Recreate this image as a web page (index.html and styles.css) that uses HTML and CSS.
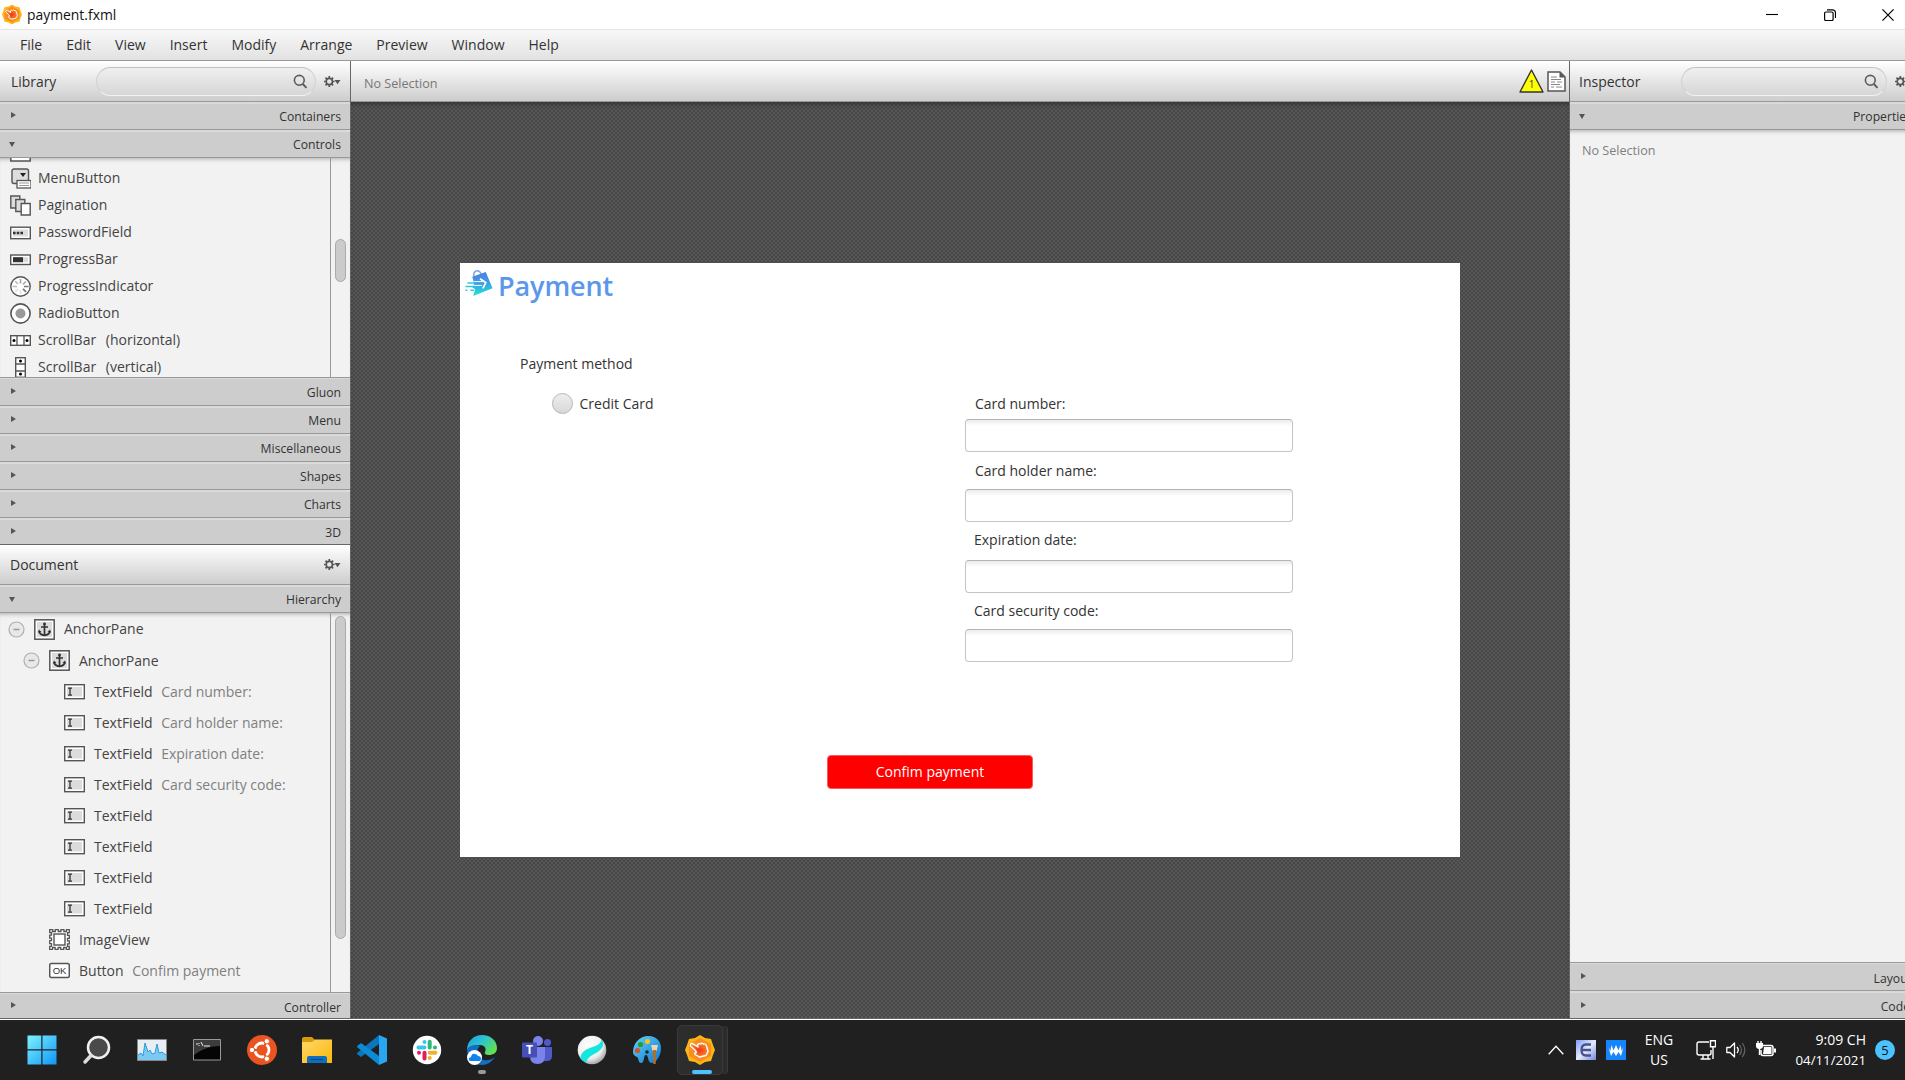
FILE: index.html
```html
<!DOCTYPE html>
<html lang="en">
<head>
<meta charset="utf-8">
<title>payment.fxml</title>
<link rel="stylesheet" href="styles.css">
</head>
<body>
<svg class="defs" width="0" height="0" aria-hidden="true">
  <defs>
    <linearGradient id="gWin" x1="0" y1="0" x2="1" y2="1"><stop offset="0" stop-color="#7df3ff"/><stop offset="1" stop-color="#0f96f8"/></linearGradient>
    <linearGradient id="gFolder" x1="0" y1="0" x2="1" y2="1"><stop offset="0" stop-color="#ffd76a"/><stop offset="1" stop-color="#fbb80b"/></linearGradient>
    <linearGradient id="gEdge" x1="0" y1="0" x2="1" y2="0.6"><stop offset="0" stop-color="#1f9fe0"/><stop offset=".5" stop-color="#2bc3d2"/><stop offset="1" stop-color="#62e04f"/></linearGradient>
    <linearGradient id="gBag" x1="0" y1="0" x2="0" y2="1"><stop offset="0" stop-color="#4a7fe0"/><stop offset=".45" stop-color="#3f9de6"/><stop offset="1" stop-color="#19ead0"/></linearGradient>
    <linearGradient id="gPaint" x1="0" y1="0" x2="1" y2="1"><stop offset="0" stop-color="#5fd3fb"/><stop offset="1" stop-color="#0f78cf"/></linearGradient>
    <linearGradient id="gE" x1="0" y1="0" x2="1" y2="1"><stop offset="0" stop-color="#7f9cf0"/><stop offset=".5" stop-color="#e4ebff"/><stop offset="1" stop-color="#7488d8"/></linearGradient>
    <radialGradient id="gBall" cx=".4" cy=".35" r=".7"><stop offset="0" stop-color="#fff"/><stop offset=".65" stop-color="#eee"/><stop offset="1" stop-color="#999"/></radialGradient>
    <radialGradient id="gHand"><stop offset="0" stop-color="#f0341c"/><stop offset="1" stop-color="#f98324"/></radialGradient>
    <symbol id="scene" viewBox="0 0 30 30">
      <path d="M15 0l5 3 6 1 2 6 2 5-2 5-2 6-6 1-5 3-5-3-6-1-2-6-2-5 2-5 2-6 6-1z" fill="#fdb515"/>
      <path d="M15 3l11 6v12l-11 6-11-6V9z" fill="#fa8d22"/>
      <path d="M5.500 9.500Q6 8 8 8.800L13 12 12.500 9.800Q14 8 15.500 9 17 7.500 18.500 9 21 8.500 21.500 11L23 16.500 21 20.500 14.500 22 10 19.500Q9 17.500 11.500 17.500L10.500 15.500 6 11.500Q5 10.500 5.500 9.500z" fill="url(#gHand)" stroke="#fff" stroke-width="1.400" stroke-linejoin="round"/>
    </symbol>
    <symbol id="search" viewBox="0 0 15 15"><circle cx="6.300" cy="6.300" r="4.900" fill="none" stroke="#5c5c5c" stroke-width="1.600"/><path d="M9.800 10l3.700 3.900" stroke="#5c5c5c" stroke-width="1.900"/></symbol>
    <symbol id="gear" viewBox="0 0 17 11"><circle cx="5.300" cy="5.500" r="3.100" fill="none" stroke="#555" stroke-width="1.600"/><path d="M5.300 0v2M5.300 9v2M0 5.500h1.800M8.800 5.500h1.800M1.500 1.700l1.400 1.400M7.700 7.900l1.400 1.400M9.100 1.700L7.700 3.100M2.900 7.900L1.500 9.300" stroke="#555" stroke-width="1.700"/><path d="M10.500 4h6l-3 4.300z" fill="#555"/></symbol>
    <symbol id="textfield" viewBox="0 0 21 21"><rect x=".7" y="3.700" width="19.600" height="14" fill="#fff" stroke="#555" stroke-width="1.400"/><rect x="3" y="6" width="15" height="9.500" fill="#dcdcdc"/><path d="M4 7.200h4M4 14.200h4M6 7v7" stroke="#333" stroke-width="1.300"/></symbol>
    <symbol id="anchor" viewBox="0 0 21 21"><rect x=".8" y=".8" width="19.400" height="19.400" fill="#fff" stroke="#555" stroke-width="1.500"/><rect x="3" y="3" width="15" height="15" fill="#dcdcdc"/><path d="M10.500 4.500v12M7 8h7M5 12c.5 3 2.500 4 5.500 4.500 3-.5 5-1.500 5.500-4.500" fill="none" stroke="#333" stroke-width="1.700"/><circle cx="10.500" cy="5" r="1.400" fill="#333"/><path d="M4 13.500l1-3 2.500 2.500zM17 13.500l-1-3-2.500 2.500z" fill="#333"/></symbol>
    <symbol id="minus" viewBox="0 0 17 17"><circle cx="8.500" cy="8.500" r="7.500" fill="#e8e8e8" stroke="#b0b0b0" stroke-width="1.200"/><path d="M5.500 8.500h6" stroke="#999" stroke-width="1.500"/></symbol>
  </defs>
</svg>

<header class="titlebar">
  <svg class="app-icon" viewBox="0 0 30 30"><use href="#scene"/></svg>
  <span class="file-name">payment.fxml</span>
  <div class="window-buttons">
    <svg viewBox="0 0 12 12"><path d="M0 5.500h12" stroke="#000" stroke-width="1.100"/></svg>
    <svg viewBox="0 0 12 12"><rect x=".6" y="3" width="8.500" height="8.500" rx="1.300" fill="none" stroke="#000" stroke-width="1.200"/><path d="M3 .8h5.500a3 3 0 0 1 3 3V9" fill="none" stroke="#000" stroke-width="1.200"/></svg>
    <svg viewBox="0 0 12 12"><path d="M.4.400l11.200 11.200M11.600.400L.400 11.600" stroke="#000" stroke-width="1.200"/></svg>
  </div>
</header>

<nav class="menubar">
  <span>File</span><span>Edit</span><span>View</span><span>Insert</span><span>Modify</span><span>Arrange</span><span>Preview</span><span>Window</span><span>Help</span>
</nav>

<main class="workspace">
  <aside class="left">
    <div class="panel-head">
      <span class="panel-name library-name">Library</span>
      <div class="search"><svg viewBox="0 0 15 15"><use href="#search"/></svg></div>
      <svg class="gear" viewBox="0 0 17 11"><use href="#gear"/></svg>
    </div>
    <div class="section"><i class="arrow"></i>Containers</div>
    <div class="section"><i class="arrow down"></i>Controls</div>
    <div class="list library-list">
      <div class="rows">
        <div class="row"><svg viewBox="0 0 21 21"><rect x=".8" y="9" width="19.400" height="11" fill="#fff" stroke="#555" stroke-width="1.500"/></svg></div>
        <div class="row"><svg viewBox="0 0 21 21"><rect x="2" y="1" width="16.500" height="14.500" rx="2" fill="#ddd" stroke="#555" stroke-width="1.400"/><path d="M10 5h6l-3 4z" fill="#222"/><rect x="7" y="12.500" width="14" height="7.500" fill="#fff" stroke="#555" stroke-width="1.300"/><path d="M9 15h10M9 17.500h10" stroke="#999"/></svg>MenuButton</div>
        <div class="row"><svg viewBox="0 0 21 21"><g stroke="#555" stroke-width="1.400"><path d="M.8 1h9v12h-9z" fill="#ddd"/><path d="M5.800 4.500h9v12h-9z" fill="#ddd"/><path d="M11.200 8.500h9v11.500h-9z" fill="#fff"/></g></svg>Pagination</div>
        <div class="row"><svg viewBox="0 0 21 21"><rect x=".7" y="5.200" width="19.600" height="11.500" fill="#fff" stroke="#555" stroke-width="1.400"/><path d="M3 7.500h15v7H3z" fill="#dcdcdc"/><path d="M3 9.700h2.600v2.600H3zM6.700 9.700h2.600v2.600H6.700zM10.400 9.700H13v2.600h-2.600z" fill="#333"/></svg>PasswordField</div>
        <div class="row"><svg viewBox="0 0 21 21"><rect x=".7" y="6" width="19.600" height="9.500" fill="#fff" stroke="#555" stroke-width="1.400"/><path d="M3 8.200h15v5H3z" fill="#dcdcdc"/><path d="M3 8.200h10v5H3z" fill="#333"/></svg>ProgressBar</div>
        <div class="row"><svg viewBox="0 0 21 21"><circle cx="10.500" cy="10.500" r="9.700" fill="#fff" stroke="#555" stroke-width="1.400"/><g stroke-width="1.700"><path d="M10.500 3v4.500M13 8.500l2.800-3" stroke="#aaa"/><path d="M14 10.500h4.500M13 12.800l3 3" stroke="#777"/><path d="M10.500 14v4M8.200 12.800l-3 3" stroke="#e4e4e4"/><path d="M7 10.500H2.700M8 8L5.200 5.200" stroke="#bbb"/></g></svg>ProgressIndicator</div>
        <div class="row"><svg viewBox="0 0 21 21"><circle cx="10.500" cy="10.500" r="9.600" fill="#fff" stroke="#555" stroke-width="1.600"/><circle cx="10.500" cy="10.500" r="5" fill="#999"/></svg>RadioButton</div>
        <div class="row"><svg viewBox="0 0 21 21"><rect x=".7" y="5.700" width="19.600" height="9.600" fill="#fff" stroke="#555" stroke-width="1.400"/><path d="M7 6v9M14 6v9" stroke="#555" stroke-width="1.300"/><circle cx="4" cy="10.500" r="1.500"/><circle cx="17" cy="10.500" r="1.500"/></svg>ScrollBar&nbsp; <span class="variant">(horizontal)</span></div>
        <div class="row"><svg viewBox="0 0 21 21"><rect x="5.700" y=".7" width="9.600" height="19.600" fill="#fff" stroke="#555" stroke-width="1.400"/><path d="M6 7h9M6 14h9" stroke="#555" stroke-width="1.300"/><circle cx="10.500" cy="4" r="1.500"/><circle cx="10.500" cy="17" r="1.500"/></svg>ScrollBar&nbsp; <span class="variant">(vertical)</span></div>
      </div>
      <div class="track"><div class="thumb library-thumb"></div></div>
    </div>
    <div class="section first"><i class="arrow"></i>Gluon</div>
    <div class="section"><i class="arrow"></i>Menu</div>
    <div class="section"><i class="arrow"></i>Miscellaneous</div>
    <div class="section"><i class="arrow"></i>Shapes</div>
    <div class="section"><i class="arrow"></i>Charts</div>
    <div class="section last"><i class="arrow"></i>3D</div>
    <div class="panel-head document-head">
      <span class="panel-name">Document</span>
      <svg class="gear" viewBox="0 0 17 11"><use href="#gear"/></svg>
    </div>
    <div class="section"><i class="arrow down"></i>Hierarchy</div>
    <div class="list tree-list">
      <div class="rows tree">
        <div class="node root"><svg class="toggle"><use href="#minus"/></svg><svg><use href="#anchor"/></svg>AnchorPane</div>
        <div class="node root child"><svg class="toggle"><use href="#minus"/></svg><svg><use href="#anchor"/></svg>AnchorPane</div>
        <div class="node leaf"><svg><use href="#textfield"/></svg>TextField<span class="info">Card number:</span></div>
        <div class="node leaf"><svg><use href="#textfield"/></svg>TextField<span class="info">Card holder name:</span></div>
        <div class="node leaf"><svg><use href="#textfield"/></svg>TextField<span class="info">Expiration date:</span></div>
        <div class="node leaf"><svg><use href="#textfield"/></svg>TextField<span class="info">Card security code:</span></div>
        <div class="node leaf"><svg><use href="#textfield"/></svg>TextField</div>
        <div class="node leaf"><svg><use href="#textfield"/></svg>TextField</div>
        <div class="node leaf"><svg><use href="#textfield"/></svg>TextField</div>
        <div class="node leaf"><svg><use href="#textfield"/></svg>TextField</div>
        <div class="node item"><svg viewBox="0 0 21 21"><path d="M.7.700h3v1.800h2.600V.700h3v1.800h2.600V.700h3v1.800h2.600V.700h2.800v3h-1.800v2.600h1.800v3h-1.800v2.600h1.800v3h-1.800v2.600h1.800v2.800h-3v-1.800h-2.600v1.800h-3v-1.800H9.100v1.800h-3v-1.800H3.500v1.800H.700v-3h1.800v-2.600H.700v-3h1.800V9.100H.700v-3h1.800V3.500H.700z" fill="#fff" stroke="#555" stroke-width="1.300"/><rect x="5" y="5" width="11" height="11" fill="#fff" stroke="#555" stroke-width="1.400"/></svg>ImageView</div>
        <div class="node item"><svg viewBox="0 0 21 21"><rect x=".7" y="3.500" width="19.600" height="14" rx="1.500" fill="#fff" stroke="#555" stroke-width="1.500"/><text x="10.500" y="14" class="ok">OK</text></svg>Button<span class="info">Confim payment</span></div>
      </div>
      <div class="track"><div class="thumb tree-thumb"></div></div>
    </div>
    <div class="section first controller"><i class="arrow"></i>Controller</div>
  </aside>

  <section class="editor">
    <div class="panel-head message-bar">
      <span class="selection">No Selection</span>
      <svg class="warning" viewBox="0 0 25 24"><path d="M12.500 1L24 23H1z" fill="#ff0" stroke="#333" stroke-width="1.400" stroke-linejoin="round"/><text x="12.700" y="19" class="warn-count">1</text></svg>
      <svg class="page" viewBox="0 0 19 21"><path d="M1 1h12l5 5v14H1z" fill="#fff" stroke="#555" stroke-width="1.500"/><path d="M12.500 1v5.500H18z" fill="#555"/><path d="M4 6h6M4 8.500h10M4 11h4m2 0h5M4 13.500h9M4 16h3m2 0h6" stroke="#888" stroke-width="1"/></svg>
    </div>
    <div class="canvas">
      <div class="form-page">
        <div class="brand">
          <svg viewBox="0 0 30 30"><path d="M10 9C8 1 15-1 18 7" fill="none" stroke="#7d9fe8" stroke-width="1.500"/><path d="M8 8l14-5 7 17-20 8 2-7-3-2 2-4z" fill="url(#gBag)"/><path d="M10 13h9M9 17h9" stroke="#fff" stroke-width="1"/><path d="M16 10l6 4-3 6" fill="none" stroke="#fff" stroke-width="1.800"/><path d="M3 14.500h7M1 18h8M1 22h2M6 22h4" stroke="#35c6e0" stroke-width="1.500"/></svg>
          <span>Payment</span>
        </div>
        <div class="form">
          <div class="method">
            <div class="method-title">Payment method</div>
            <div class="radio"><i></i>Credit Card</div>
          </div>
          <div class="fields">
            <div class="label">Card number:</div><div class="field"></div>
            <div class="label holder">Card holder name:</div><div class="field f2"></div>
            <div class="label expiry">Expiration date:</div><div class="field f3"></div>
            <div class="label code">Card security code:</div><div class="field f4"></div>
          </div>
        </div>
        <div class="confirm">Confim payment</div>
      </div>
    </div>
  </section>

  <aside class="inspector">
    <div class="panel-head">
      <span class="panel-name inspector-name">Inspector</span>
      <div class="search"><svg viewBox="0 0 15 15"><use href="#search"/></svg></div>
      <svg class="gear" viewBox="0 0 17 11"><use href="#gear"/></svg>
    </div>
    <div class="section"><i class="arrow down"></i>Properties</div>
    <div class="inspector-body">No Selection</div>
    <div class="section first layout-section"><i class="arrow"></i>Layout</div>
    <div class="section code-section"><i class="arrow"></i>Code</div>
  </aside>
</main>

<footer class="taskbar">
  <div class="apps">
    <div class="app"><svg viewBox="0 0 30 30"><path d="M.5.500H14.300v13.800H.500zM15.500.500H29.500v13.800h-14zM.500 15.500H14.300v14H.500zM15.500 15.500h14v14h-14z" fill="url(#gWin)"/></svg></div>
    <div class="app"><svg viewBox="0 0 30 30"><circle cx="16.500" cy="12.500" r="10.500" fill="#4a4a4a" stroke="#f0f0f0" stroke-width="2.500"/><path d="M9 20.500l-6 6.500" stroke="#ddd" stroke-width="3.500" stroke-linecap="round"/></svg></div>
    <div class="app"><svg viewBox="0 0 30 30"><path d="M.5 4.500h29v21H.500z" fill="#e8eef2" stroke="#888"/><path d="M1 20l3-2 2 3 2-13 3 9 2-2 2 4 3-1 2-9 2 9 3-1 4 3v5H1z" fill="#7ccaf2"/><path d="M1 20l3-2 2 3 2-13 3 9 2-2 2 4 3-1 2-9 2 9 3-1 4 3" fill="none" stroke="#2a9be0"/></svg></div>
    <div class="app"><svg viewBox="0 0 30 30"><path d="M1.500 4.500h27v20.500h-27z" fill="#050505" stroke="#999"/><path d="M2 5h26v6c-9 0-18 3-26 9z" fill="#3c3c3c"/><path d="M4 9h2M7 8v1M7 10v1M9 7l2 4M12 11h6" stroke="#eee"/></svg></div>
    <div class="app"><svg viewBox="0 0 30 30"><circle cx="15" cy="15" r="15" fill="#e95420"/><circle cx="15" cy="15" r="7" fill="none" stroke="#fff" stroke-width="2.800"/><path d="M15 15L5 15M15 15l5-9M15 15l5 9" stroke="#e95420" stroke-width="2"/><g fill="#fff" stroke="#e95420" stroke-width="1"><circle cx="5" cy="15" r="2.700"/><circle cx="19.800" cy="6.300" r="2.700"/><circle cx="19.800" cy="23.700" r="2.700"/></g></svg></div>
    <div class="app"><svg viewBox="0 0 30 30"><path d="M0 4q0-2 2-2h8l3 3-2 3H0z" fill="#d99a08"/><path d="M0 7h10l3-2.500h17V28H0z" fill="url(#gFolder)"/><path d="M5 28v-5q0-2 2-2h16q2 0 2 2v5z" fill="#0f6fbe"/><path d="M9 24.500h12" stroke="#064a80" stroke-width="1.200"/></svg></div>
    <div class="app"><svg viewBox="0 0 30 30"><path d="M22 0v9L4 22l-3.500-2.800L0 18z" fill="#0a76bd"/><path d="M22 30v-9L4 8 .5 10.700 0 12z" fill="#0d8ad6"/><path d="M22 0l8 3.500v23L22 30z" fill="#2aa5ef"/></svg></div>
    <div class="app"><svg viewBox="0 0 30 30"><circle cx="15" cy="15" r="14.200" fill="#fff"/><g stroke-width="4" stroke-linecap="round"><path d="M12.500 7v.1M6.500 12.400h6" stroke="#36c5f0"/><path d="M17.700 6.700v5.700M23 12.400v.1" stroke="#2eb67d"/><path d="M17.700 17.700h5.700M17.700 23v.1" stroke="#ecb22e"/><path d="M12.500 17.700v5.700M7 17.700v.1" stroke="#e01e5a"/></g></svg></div>
    <div class="app"><svg viewBox="0 0 30 30"><path d="M0 15C0 6 7 0 15 0c9 0 15 6 15 13 0 5-4 7-8 7-3 0-5-1-4-3 2-4-1-7-5-7C7 10 2 12 0 15z" fill="url(#gEdge)"/><path d="M0 14c3-4 9-5 13-3-4 3-4 10 1 13 4 2 9 2 14-2-3 5-8 8-13 8C7 30 0 24 0 14z" fill="#126fc2"/><circle cx="7.500" cy="22.500" r="7.500" fill="#fff"/><path d="M3 26q-2-1-1-3l2-1q1-4 4-3 2 0 3 2 3 0 3 3 0 2-2 2z" fill="#1082ea"/></svg><i class="running"></i></div>
    <div class="app"><svg viewBox="0 0 30 30"><circle cx="16" cy="6" r="5" fill="#7b83eb"/><circle cx="25.500" cy="7.500" r="3.500" fill="#5059c9"/><path d="M20 12h10v9q0 5-5 5h-5z" fill="#5059c9"/><path d="M8 12h15v9q0 8-7.500 8T8 21z" fill="#7b83eb"/><rect y="7.500" width="15" height="15" rx="1" fill="#464eb8"/><text x="7.500" y="19.200" class="teams">T</text></svg></div>
    <div class="app"><svg viewBox="0 0 30 30"><circle cx="15" cy="15" r="14.300" fill="url(#gBall)"/><path d="M24.500 4.500C26 14 17 14 12 17c-4 2.500-6 5-6.500 8.500L3.500 23C4 17 8 15 13 13c7-2.500 11-4 11.500-8.500z" fill="#15e6e0"/><path d="M24.500 4.500C27 8 27 12 22 16c-5 4-12 5-12.500 11.800L5.500 25.500C5 20 9 17 14 14.500 20 12 24 10 24.500 4.500z" fill="#15e6e0"/></svg></div>
    <div class="app"><svg viewBox="0 0 30 30"><path d="M1 17C1 8 8 1 16 1c9 0 13 6 13 12 0 8-5 15-9 15-5 0-3-8-6-8s-1 8-5 8c-3 0-2-5-4-6s-4-2-4-5z" fill="url(#gPaint)"/><circle cx="5.500" cy="15.500" r="2.600" fill="#d3542c"/><circle cx="8.500" cy="9.500" r="2.600" fill="#2b9c24"/><circle cx="15.500" cy="6.500" r="2.500" fill="#ffc31c"/><circle cx="15" cy="17" r="1.800" fill="#1d2833"/><path d="M19 10h7l-1.500 6h-4z" fill="#eed4b0"/><path d="M21 15h3l-.3 14h-2.400z" fill="#bd6b18"/></svg></div>
    <div class="app active"><svg viewBox="0 0 30 30"><use href="#scene"/></svg><i class="running current"></i></div>
  </div>
  <div class="tray">
    <svg class="chevron" viewBox="0 0 16 10"><path d="M.7 9.200L8 1.200l7.300 8" fill="none" stroke="#fff" stroke-width="1.300"/></svg>
    <svg class="tile" viewBox="0 0 20 20"><path d="M0 0h20v20H0z" fill="url(#gE)"/><path d="M15 4.500H10q-4.500 0-4.500 5.500T10 15.500h5M6 10h9" fill="none" stroke="#48528f" stroke-width="2.300"/></svg>
    <svg class="tile" viewBox="0 0 20 20"><path d="M0 0h20v20H0z" fill="#1684fc"/><path d="M2.500 7l2.500 9 2.500-4 2.500 4 2.500-4 2.500 4 2.500-9-2 4-1-6-2 5.500-2.500-5.500-2.500 5.500-2-5.500-1 6z" fill="#fff"/></svg>
    <div class="language">ENG<br>US</div>
    <svg class="tile" viewBox="0 0 20 20"><path d="M13 2H3q-2 0-2 2v9q0 2 2 2h10q2 0 2-2v-3M4.500 19h10M7 15v3.500M12 15v3.500" fill="none" stroke="#fff" stroke-width="1.400"/><path d="M14.500.8h5v6h-5zM17 7v12" fill="none" stroke="#fff" stroke-width="1.400"/></svg>
    <svg class="tile" viewBox="0 0 20 20"><path d="M.8 7.500H4L8.500 3v14L4 12.500H.800z" fill="none" stroke="#fff" stroke-width="1.300" stroke-linejoin="round"/><path d="M11 7q2.500 3 0 6" fill="none" stroke="#fff" stroke-width="1.300"/><path d="M13.500 5q4 5 0 10M16.300 3q5 7 0 14" fill="none" stroke="#666" stroke-width="1.200"/></svg>
    <svg class="tile" viewBox="0 0 20 20"><path d="M6 5.500h9q2 0 2 2v6q0 2-2 2H7q-2 0-2-2V10" fill="none" stroke="#fff" stroke-width="1.500"/><path d="M8 7h7.500v7H7zM18 8.500h2v4h-2zM0 3h7v3q0 3-3.500 3T0 6z" fill="#fff"/><path d="M2 1v3M5 1v3M3.500 8v7" stroke="#fff" stroke-width="1.400"/></svg>
    <div class="clock"><span>9:09 CH</span><br>04/11/2021</div>
    <div class="badge">5</div>
  </div>
</footer>
</body>
</html>
```
FILE: styles.css
```css
* { box-sizing: border-box; }
body {
  margin: 0;
  width: 1905px;
  height: 1080px;
  overflow: hidden;
  display: flex;
  flex-direction: column;
  background: #f2f2f2;
  color: #333;
  font: 14px/20px "Open Sans", "Noto Sans", sans-serif;
  white-space: nowrap;
}
svg { display: block; flex: none; }
.defs { position: absolute; }

.titlebar { height: 29px; flex: none; display: flex; align-items: center; padding-left: 2px; background: #fff; color: #111; }
.app-icon { width: 20px; height: 23px; }
.file-name { margin-left: 5px; font-size: 13.9px; }
.window-buttons { margin-left: auto; display: flex; gap: 46px; padding-right: 11px; }
.window-buttons svg { width: 12px; height: 12px; }

.menubar { height: 32px; flex: none; display: flex; align-items: center; gap: 24px; padding-left: 20px; border-top: 1px solid #e4e4e4; border-bottom: 1px solid #999; background: linear-gradient(#f8f8f8, #e2e2e2); }

.workspace { height: 958px; flex: none; display: flex; border-bottom: 1px solid #666; overflow: hidden; }
.left { width: 350px; flex: none; display: flex; flex-direction: column; }
.panel-head { height: 41px; flex: none; display: flex; align-items: center; padding: 0 9px 0 10px; border-bottom: 1px solid #999; background: linear-gradient(#fff, #cdcdcd); }
.panel-name { line-height: 20px; }
.library-name, .inspector-name { padding-top: 2px; }
.library-name { width: 85px; margin-left: 1px; font-size: 13.900px; }
.document-head { height: 40px; }
.search { height: 29px; flex: 1; display: flex; align-items: center; justify-content: flex-end; margin-top: 1px; padding-right: 7px; border: 1.500px solid; border-color: #c2c2c2 #d2d2d2 #f2f2f2; border-radius: 15px; background: linear-gradient(#f0f0f0, #d6d6d6); }
.search svg { width: 15px; height: 15px; }
.gear { width: 17px; height: 11px; margin-left: 8px; }
.document-head .gear { margin-left: auto; }

.section { height: 28px; flex: none; display: flex; align-items: center; justify-content: space-between; padding: 0 9px 0 11px; border-top: 2px solid #dadada; border-bottom: 1px solid #999; background: #cdcdcd; font-size: 12.200px; line-height: 18px; }
.section.first { height: 29px; padding-top: 2px; box-shadow: inset 0 1px #dadada; border-top: 1px solid #999; }
.section.last { height: 27px; padding-top: 1px; border-bottom-color: #666; }
.section.controller { height: 27px; padding-top: 3px; border-bottom: 0; }
.section.layout-section { padding-top: 4px; }
.arrow { width: 0; height: 0; margin-top: -3px; border: solid transparent; border-width: 3.500px 0 3.500px 5px; border-left-color: #555; }
.arrow.down { margin: -1px 0 0 -2px; border-width: 5px 3.500px 0; border-color: #555 transparent; }
.controller .arrow, .layout-section .arrow, .code-section .arrow { margin-top: -5px; }

.list { flex: none; display: flex; overflow: hidden; background: #f2f2f2; box-shadow: inset 0 4px 4px -3px #aaa; color: #444; }
.library-list { height: 219px; }
.tree-list { height: 379px; }
.rows { width: 330px; flex: none; }
.library-list .rows { margin-top: -21px; }
.row { height: 27px; display: flex; align-items: center; gap: 7px; padding-left: 10px; }
.row svg { width: 21px; height: 21px; margin-top: 1px; }
.variant { margin-left: -1px; }
.track { flex: 1; border-left: 1px solid #999; padding-left: 4px; }
.thumb { width: 11px; border: 1px solid #aaa; border-radius: 5.500px; background: #cbcbcb; }
.library-thumb { height: 43px; margin-top: 81px; }
.tree-thumb { height: 323px; margin-top: 3px; }
.node { height: 31px; display: flex; align-items: center; gap: 9px; }
.node svg { width: 21px; height: 21px; }
.node svg.toggle { width: 17px; height: 17px; }
.node.root { height: 32px; padding-left: 8px; }
.node.child { height: 31px; padding-left: 23px; }
.node.leaf { padding-left: 64px; }
.node.item { padding-left: 49px; }
.info { margin-left: -.5px; color: #808080; }
.ok { font: 9.500px "Liberation Sans", sans-serif; text-anchor: middle; fill: #333; }

.editor { width: 1220px; flex: none; display: flex; flex-direction: column; border: solid #666; border-width: 0 1px; }
.message-bar { padding: 0 3px 0 13px; }
.selection { font-size: 12.600px; color: #777; padding-top: 5px; }
.warning { width: 25px; height: 24px; margin-left: auto; }
.warn-count { font: 10px "Open Sans", sans-serif; text-anchor: middle; fill: #444; }
.page { width: 19px; height: 21px; margin-left: 3px; }
.canvas { flex: 1; padding: 161px 0 0 109px; background: repeating-conic-gradient(#464646 0 25%, #585858 0 50%) 0 0 / 4px 4px; box-shadow: inset 0 4px 4px -2px #333; }
.form-page { width: 1000px; height: 594px; background: #fff; color: #333; }
.brand { height: 50px; display: flex; padding: 6px 0 0 4px; }
.brand svg { width: 30px; height: 29px; }
.brand span { margin: -1px 0 0 4px; font: 600 27px/36px "Open Sans", sans-serif; letter-spacing: -.1px; color: #5b97ea; }
.form { height: 442px; display: flex; }
.method { width: 505px; padding: 41px 0 0 60px; }
.radio { display: flex; align-items: center; gap: 7px; margin: 19px 0 0 31.500px; }
.radio i { width: 21px; height: 21px; border: 1.500px solid #b5b5b5; border-radius: 50%; background: linear-gradient(#eee, #d8d8d8); }
.fields { width: 328px; padding-top: 81px; }
.label { height: 20px; padding-left: 10px; }
.field { height: 33px; margin-top: 5px; border: 1px solid #c4c4c4; border-top-color: #b4b4b4; border-radius: 4px; background: linear-gradient(#ececec, #fff 6px); }
.holder { margin-top: 9px; }
.f2 { margin-top: 8px; }
.expiry { margin-top: 8px; padding-left: 9px; }
.f3 { margin-top: 10px; }
.code { margin-top: 8px; padding-left: 9px; }
.f4 { margin-top: 8px; }
.confirm { width: 206px; height: 34px; margin-left: 367px; border: 1px solid #ff5a5a; border-radius: 4px; background: red; color: #fff; text-align: center; line-height: 31px; }

.inspector { width: 351px; flex: none; display: flex; flex-direction: column; }
.inspector-name { width: 102px; margin-left: -1px; }
.inspector-body { flex: 1; padding: 11px 12px; background: #f2f2f2; box-shadow: inset 0 4px 4px -3px #aaa; font-size: 12.600px; color: #808080; }
.section.code-section { height: 27px; padding-top: 3px; padding-right: 11px; border-bottom: 0; }

.taskbar { height: 61px; flex: none; display: flex; justify-content: space-between; border-top: 1px solid #fff; background: #202020; color: #fff; }
.apps { display: flex; padding-left: 14px; }
.app { position: relative; width: 55px; height: 60px; display: grid; place-items: center; }
.app svg { width: 30px; height: 30px; }
.app.active { width: 46px; height: 50px; margin: 5px 0 0 3px; border: 1px solid #3a3a3a; border-radius: 5px; background: #2d2d2d; box-shadow: 5px 0 0 -1px #2b2b2b, 6px 0 0 -1px #3a3a3a; }
.teams { font: bold 12px "Open Sans", sans-serif; text-anchor: middle; fill: #fff; }
.running { position: absolute; left: 24px; bottom: 6px; width: 8px; height: 4px; border-radius: 2px; background: #999; }
.running.current { left: 14px; bottom: 0; width: 20px; background: #4cc2ff; }
.tray { display: flex; align-items: center; padding-right: 10px; font-size: 14px; }
.chevron { width: 16px; height: 10px; margin-right: 12px; }
.tile { width: 20px; height: 20px; margin-right: 10px; }
.language { width: 46px; margin-right: 14px; text-align: center; }
.clock { width: 80px; margin-right: 9px; text-align: right; font-size: 13.300px; }
.clock span { font-size: 14px; }
.badge { width: 20px; height: 20px; border-radius: 50%; background: #4cc2ff; color: #111; text-align: center; font-size: 13px; }
```
